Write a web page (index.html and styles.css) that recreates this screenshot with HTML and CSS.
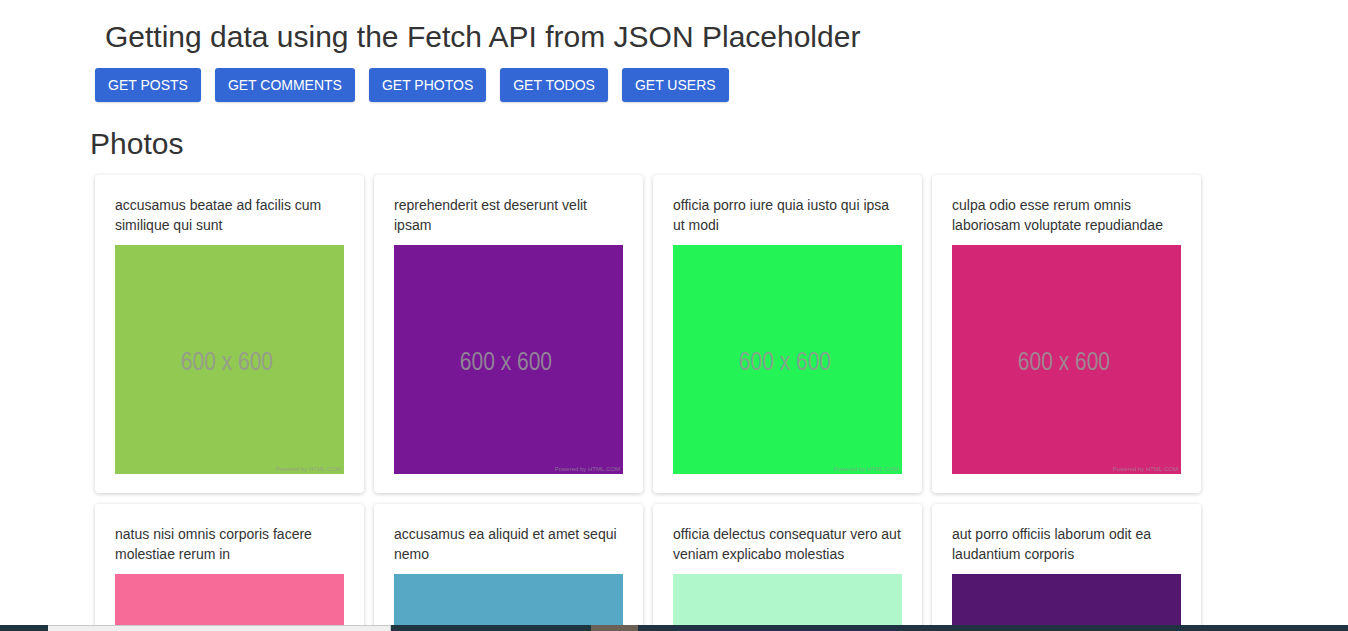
FILE: index.html
```html
<!DOCTYPE html>
<html>
<head>
<meta charset="utf-8">
<link rel="stylesheet" href="styles.css">
</head>
<body>
<div class="page">
  <h1 class="title">Getting data using the Fetch API from JSON Placeholder</h1>
  <div class="buttons">
    <button class="btn">GET POSTS</button>
    <button class="btn">GET COMMENTS</button>
    <button class="btn">GET PHOTOS</button>
    <button class="btn">GET TODOS</button>
    <button class="btn">GET USERS</button>
  </div>
  <h2 class="section">Photos</h2>
  <div class="grid">
    <div class="card"><p class="card-title">accusamus beatae ad facilis cum similique qui sunt</p><div class="ph ph-1"><span class="ph-text">600 x 600</span><span class="ph-credit">Powered by HTML.COM</span></div></div>
    <div class="card"><p class="card-title">reprehenderit est deserunt velit ipsam</p><div class="ph ph-2"><span class="ph-text">600 x 600</span><span class="ph-credit">Powered by HTML.COM</span></div></div>
    <div class="card"><p class="card-title">officia porro iure quia iusto qui ipsa ut modi</p><div class="ph ph-3"><span class="ph-text">600 x 600</span><span class="ph-credit">Powered by HTML.COM</span></div></div>
    <div class="card"><p class="card-title">culpa odio esse rerum omnis laboriosam voluptate repudiandae</p><div class="ph ph-4"><span class="ph-text">600 x 600</span><span class="ph-credit">Powered by HTML.COM</span></div></div>
    <div class="card"><p class="card-title">natus nisi omnis corporis facere molestiae rerum in</p><div class="ph ph-5"><span class="ph-text">600 x 600</span><span class="ph-credit">Powered by HTML.COM</span></div></div>
    <div class="card"><p class="card-title">accusamus ea aliquid et amet sequi nemo</p><div class="ph ph-6"><span class="ph-text">600 x 600</span><span class="ph-credit">Powered by HTML.COM</span></div></div>
    <div class="card"><p class="card-title">officia delectus consequatur vero aut veniam explicabo molestias</p><div class="ph ph-7"><span class="ph-text">600 x 600</span><span class="ph-credit">Powered by HTML.COM</span></div></div>
    <div class="card"><p class="card-title">aut porro officiis laborum odit ea laudantium corporis</p><div class="ph ph-8"><span class="ph-text">600 x 600</span><span class="ph-credit">Powered by HTML.COM</span></div></div>
  </div>
</div>
<div class="taskbar">
  <span class="tb tb-dark tb-a"></span>
  <span class="tb tb-light"></span>
  <span class="tb tb-dark tb-b"></span>
  <span class="tb tb-brown"></span>
  <span class="tb tb-dark tb-c"></span>
</div>
</body>
</html>
```
FILE: styles.css
```css
html, body {
  margin: 0;
  padding: 0;
  background: #fff;
}
body {
  font-family: "Liberation Sans", Arial, sans-serif;
  color: #333;
  overflow: hidden;
}
.page {
  padding: 0 0 0 90px;
}
.title {
  margin: 0;
  padding: 19px 0 0 15px;
  font-size: 30px;
  font-weight: 400;
  line-height: 36px;
  color: #333;
}
.buttons {
  display: flex;
  gap: 14px;
  margin: 13px 0 0 5px;
}
.btn {
  font-family: "Liberation Sans", Arial, sans-serif;
  font-size: 14px;
  color: #fff;
  background: #3367d6;
  border: none;
  border-radius: 3px;
  height: 34px;
  padding: 0 13px;
  box-shadow: 0 1px 2px rgba(0,0,0,0.15);
}
.section {
  margin: 24px 0 0 0;
  font-size: 30px;
  font-weight: 400;
  line-height: 36px;
  color: #333;
}
.grid {
  display: grid;
  grid-template-columns: repeat(4, 269px);
  column-gap: 10px;
  row-gap: 11px;
  margin: 13px 0 0 5px;
}
.card {
  background: #fff;
  border-radius: 4px;
  box-shadow: 0 1px 4px rgba(0,0,0,0.2);
  padding: 20px 20px 19px 20px;
}
.card-title {
  margin: 0 0 10px 0;
  font-size: 14px;
  line-height: 20px;
  height: 40px;
  color: #333;
}
.ph {
  position: relative;
  width: 229px;
  height: 229px;
  display: flex;
  align-items: center;
  justify-content: center;
}
.ph-text {
  font-family: "Liberation Sans Narrow", "Liberation Sans", Arial, sans-serif;
  font-size: 25px;
  color: #969696;
  opacity: 0.85;
  transform: translate(-3px, 2px) scaleX(0.84);
}
.ph-credit {
  position: absolute;
  right: 3px;
  bottom: 2px;
  font-size: 6px;
  color: rgba(150,150,150,0.7);
}
.ph-1 { background: #92c952; }
.ph-2 { background: #771796; }
.ph-3 { background: #24f355; }
.ph-4 { background: #d32776; }
.ph-5 { background: #f66b97; }
.ph-6 { background: #56a8c5; }
.ph-7 { background: #b0f7cc; }
.ph-8 { background: #54176f; }
.taskbar {
  position: fixed;
  left: 0;
  right: 0;
  bottom: 0;
  height: 6px;
  display: flex;
}
.tb { height: 6px; display: block; }
.tb-dark { background: #1f3640; }
.tb-a { width: 48px; }
.tb-light { width: 343px; background: #f0f0f0; border-top: 1px solid #c8c8c8; box-sizing: border-box; border-right: 1px solid #c8c8c8; }
.tb-b { width: 200px; }
.tb-brown { width: 47px; background: #6b6156; }
.tb-c { flex: 1; background: #1f3342; }
```
